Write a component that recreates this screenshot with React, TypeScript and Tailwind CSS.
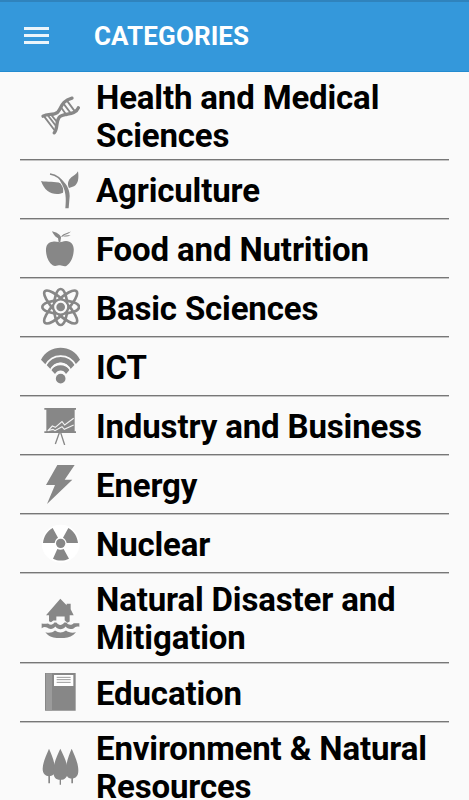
import type { ReactNode } from "react";

type Category = { name: string; height: string; box: string; icon: ReactNode };

const categories: Category[] = [
  {
    name: "Health and Medical Sciences",
    height: "h-[88px]",
    box: "30 46.5 120 120",
    icon: (
      <g fill="none" stroke="#878787" strokeLinecap="round">
        <path strokeWidth="10" d="M39 107C54 98 71 106 83 95S92 62 126 53" />
        <path strokeWidth="10" d="M73 157C85 142 76 120 90 108S135 106 145 82" />
        <path strokeWidth="5.5" d="M44 110L72 147M54 105L80 139M65 105L81 124M94 82L110 104M101 70L123 99M112 62L134 92" />
      </g>
    ),
  },
  {
    name: "Agriculture",
    height: "h-[59px]",
    box: "30 27 120 120",
    icon: (
      <g>
        <path d="M33 63C52 67 76 63 92 70C100 76 101 90 99 98C84 105 65 102 53 93C43 86 38 75 33 63Z" />
        <path d="M144 34C147 54 145 72 132 79L117 84C111 72 114 61 124 52C131 46 139 43 144 34Z" />
        <path fill="none" stroke="#fafafa" strokeWidth="3" d="M84 62C97 72 103 86 104 102" />
        <path fill="none" stroke="#878787" strokeWidth="5" d="M60 42C80 45 96 60 104 76" />
        <path d="M88 54C106 67 119 84 119 108L116 145H106C109 116 109 90 90 62Z" />
      </g>
    ),
  },
  {
    name: "Food and Nutrition",
    height: "h-[59px]",
    box: "30 24 120 120",
    icon: (
      <g>
        <path d="M86 66C91 69 97 63 108 63C125 64 133 76 131 94C130 112 121 130 110 137C103 141 96 136 90 136C83 136 75 141 68 136C56 128 49 111 48 94C47 76 54 66 68 65C76 64 80 65 86 66Z" />
        <path d="M66 34C79 37 92 43 93 55C83 58 72 48 66 34Z" />
        <path d="M86 67L84 54L90 49L93 52L91 67ZM93 50C103 38 115 40 122 34C119 42 106 42 97 50ZM99 48C108 45 116 45 122 46C115 50 106 51 99 48Z" />
      </g>
    ),
  },
  {
    name: "Basic Sciences",
    height: "h-[59px]",
    box: "30 21 120 120",
    icon: (
      <g fill="none" stroke="#878787" strokeWidth="8">
        <ellipse cx="92" cy="81" rx="55" ry="20" />
        <ellipse cx="92" cy="81" rx="67" ry="20" transform="rotate(45 92 81)" />
        <ellipse cx="92" cy="81" rx="67" ry="20" transform="rotate(-45 92 81)" />
        <ellipse cx="92" cy="81" rx="20" ry="54" />
        <circle cx="92" cy="81" r="22" fill="#fafafa" strokeWidth="5" />
        <circle cx="92" cy="81" r="13" fill="#878787" stroke="none" />
      </g>
    ),
  },
  {
    name: "ICT",
    height: "h-[59px]",
    box: "30 24 120 120",
    icon: (
      <g>
        <path d="M33 65C56 17 128 17 150 65L135 81C117 44 67 44 48 81Z" />
        <path d="M49 80C68 46 116 46 134 80L121 94C108 68 76 68 62 94Z" />
        <path d="M63 95C76 77 107 77 119 95L108 108C101 94 83 94 75 108Z" />
        <g fill="none" stroke="#fafafa" strokeWidth="5">
          <path d="M46 83C67 45 117 45 138 83M61 97C76 69 107 69 122 97" />
        </g>
        <circle cx="92" cy="122" r="17" fill="#fafafa" />
        <circle cx="92" cy="122" r="14.5" />
      </g>
    ),
  },
  {
    name: "Industry and Business",
    height: "h-[59px]",
    box: "30 24 120 120",
    icon: (
      <g>
        <path d="M43 33H138V38H134V103H138V108H43V103H49V38H43Z" />
        <path fill="none" stroke="#878787" strokeWidth="4" d="M88 107L76 141M92 107L104 144" />
        <path fill="none" stroke="#f2f2f2" strokeWidth="3.5" d="M53 102L67 87L76 91L96 74L104 84L131 64M53 101L69 97L75 101L96 89L103 97L131 84" />
      </g>
    ),
  },
  {
    name: "Energy",
    height: "h-[59px]",
    box: "30 24 120 120",
    icon: <path d="M82 27H134L104 71H127L51 144L75 87H48Z" />,
  },
  {
    name: "Nuclear",
    height: "h-[59px]",
    box: "30 24 120 120",
    icon: (
      <g>
        <circle cx="92" cy="86" r="57" fill="#ffffff" />
        <circle cx="92" cy="85" r="14" />
        <path d="M39 84C41 65 51 49 68 39L84 68C78 72 75 77 74 84ZM144 84C142 65 132 49 115 39L99 68C105 72 109 77 110 84ZM82 102C88 105 95 105 101 102L117 131C101 139 83 138 69 131Z" />
      </g>
    ),
  },
  {
    name: "Natural Disaster and Mitigation",
    height: "h-[90px]",
    box: "30 28.5 120 120",
    icon: (
      <g>
        <path d="M91 31L110 50V46H122V62L131 80H119V99L112 103L104 95V84H79V96L70 96L63 101L57 98V80H48Z" />
        <path d="M35 105C44 107 48 105 54 105C62 111 69 109 73 102H79C86 112 96 112 103 102H109C115 110 124 111 131 104H148V115C140 112 136 115 132 119C122 124 111 121 107 114C98 125 84 124 76 114C70 123 58 123 51 117C45 114 41 115 35 119Z" />
        <path d="M46 131C57 134 67 133 75 126C86 134 97 134 108 126C115 132 127 134 138 131C126 146 109 149 91 149C74 149 57 146 46 131Z" />
      </g>
    ),
  },
  {
    name: "Education",
    height: "h-[59px]",
    box: "30 27 120 120",
    icon: (
      <g>
        <path d="M45 30H137V143H45Z" />
        <path fill="#9b9b9b" d="M48 31H66V142H48Z" />
        <path fill="#ffffff" d="M72 36H130V69H72Z" />
        <path fill="none" stroke="#999999" strokeWidth="3" d="M80 43H122M80 50H122M80 58H122" />
      </g>
    ),
  },
  {
    name: "Environment & Natural Resources",
    height: "h-[90px]",
    box: "30 34.5 120 120",
    icon: (
      <g>
        <path d="M57 40C64 56 75 80 75 102C75 117 68 122 57 122S38 115 38 100C38 81 50 57 57 40ZM125 40C132 57 145 81 145 105C145 122 137 129 125 129S108 121 108 104C108 79 118 57 125 40Z" />
        <path d="M91 40C101 61 113 83 113 107C113 125 105 133 91 133S70 124 70 107C70 83 83 58 91 40Z" />
        <path d="M55 119H60V143H55ZM89 130H93V148H89ZM124 126H129V143H124Z" />
      </g>
    ),
  },
];

export default function App() {
  return (
    <div className="h-[800px] w-[469px] overflow-hidden bg-[#fafafa] font-['Roboto',sans-serif]">
      <header className="flex h-[72px] items-center border-t-2 border-b border-t-[#2f83bd] border-b-[#238bd0] bg-[#3498db] pl-6 text-white">
        <div className="-mt-0.5 flex w-[25px] flex-col gap-1">
          <span className="h-[3px] bg-white/90" />
          <span className="h-[3px] bg-white/90" />
          <span className="h-[3px] bg-white/90" />
        </div>
        <h1 className="-mt-0.5 ml-[45px] text-[26px] leading-none font-bold tracking-[0.1px]">CATEGORIES</h1>
      </header>
      <ul className="px-5">
        {categories.map((category) => (
          <li
            key={category.name}
            className={`flex items-center border-b border-[#777777] pl-5 shadow-[0_1px_0_#c4c4c4] ${category.height}`}
          >
            <svg className="size-10 shrink-0" viewBox={category.box} fill="#878787">
              {category.icon}
            </svg>
            <span className="ml-4 w-[350px] shrink-0 pt-[3px] text-[33px] leading-[38px] font-bold tracking-[-0.15px] text-black">
              {category.name}
            </span>
          </li>
        ))}
      </ul>
    </div>
  );
}
